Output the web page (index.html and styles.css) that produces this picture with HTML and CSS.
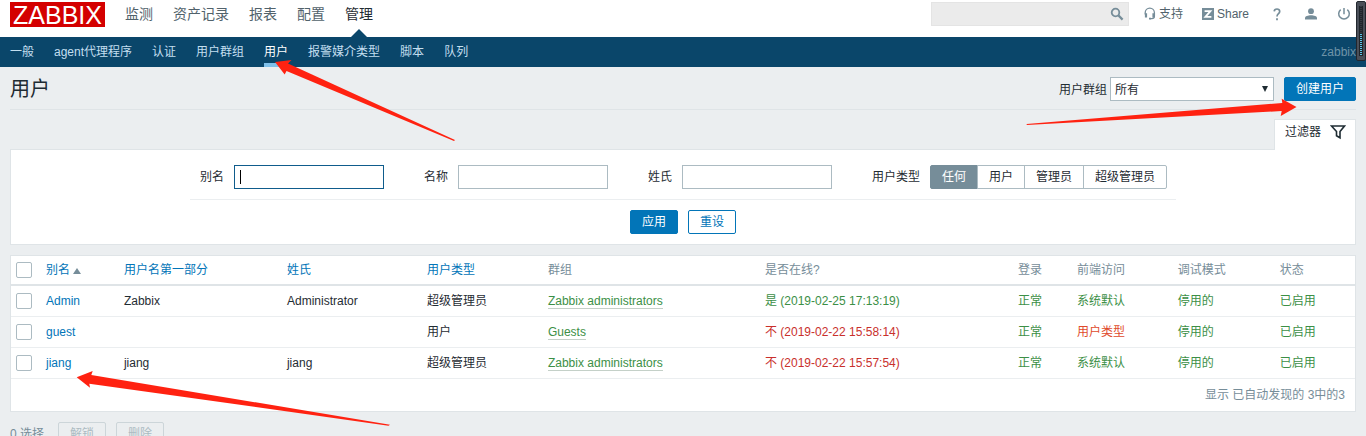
FILE: index.html
```html
<!DOCTYPE html>
<html lang="zh-CN">
<head>
<meta charset="utf-8">
<title>用户</title>
<link rel="stylesheet" href="styles.css">
</head>
<body>
<header class="top">
  <a class="logo" href="#">ZABBIX</a>
  <nav class="menu">
    <a href="#">监测</a>
    <a href="#">资产记录</a>
    <a href="#">报表</a>
    <a href="#">配置</a>
    <a href="#" class="current">管理</a>
  </nav>
  <form class="search">
    <input type="text" aria-label="搜索">
    <button type="button" aria-label="搜索">
      <svg width="14" height="14" viewBox="0 0 14 14"><circle cx="5.5" cy="5.5" r="3.8" fill="none" stroke="#768d99" stroke-width="1.8"/><path d="M8.4 8.4L12.6 12.6" stroke="#768d99" stroke-width="2.2"/></svg>
    </button>
  </form>
  <nav class="tools">
    <a class="support" href="#"><svg width="12" height="14" viewBox="0 0 12 14" fill="none" stroke="#768d99"><path d="M1.2 7.5V5.8a4.6 4.6 0 0 1 9.2 0v3.4c0 1.6-.9 2.4-2.6 2.4H6.4" stroke-width="1.3"/><path d="M2 6.2v4.2M9.5 6.2v4.2" stroke-width="2.2"/><path d="M5 11.6h2" stroke-width="1.8"/></svg>支持</a>
    <a class="share" href="#"><svg width="12" height="12" viewBox="0 0 12 12"><path fill="#768d99" d="M0 0h12v12H0z"/><path fill="none" stroke="#fff" stroke-width="1.8" d="M2.600 3.200h5.800L3.400 8.800h6"/></svg>Share</a>
    <a class="help" href="#" aria-label="帮助"><svg width="8" height="13" viewBox="0 0 8 13"><path fill="none" stroke="#768d99" stroke-width="1.700" d="M1.200 3.400C1.300 1.900 2.400 1 4 1s2.700 1 2.700 2.400C6.700 5.700 4 5.600 4 8.500"/><path fill="#768d99" d="M3.100 10.300h1.800v1.900H3.100z"/></svg></a>
    <a class="profile" href="#" aria-label="用户"><svg width="12" height="12" viewBox="0 0 12 12" fill="#768d99"><circle cx="6" cy="3.200" r="2.900"/><path d="M0 11.500V10c0-1.800 3-2.800 6-2.800s6 1 6 2.800v1.500z"/></svg></a>
    <a class="power" href="#" aria-label="注销"><svg width="14" height="14" viewBox="0 0 14 14" fill="none" stroke="#768d99" stroke-width="1.500"><path d="M3.700 2.600a5.300 5.300 0 1 0 6.600 0M7 1v6.300"/></svg></a>
  </nav>
</header>
<nav class="subnav">
  <a href="#">一般</a>
  <a href="#">agent代理程序</a>
  <a href="#">认证</a>
  <a href="#">用户群组</a>
  <a href="#" class="current">用户</a>
  <a href="#">报警媒介类型</a>
  <a href="#">脚本</a>
  <a href="#">队列</a>
  <span class="server">zabbix</span>
</nav>
<main>
  <div class="heading">
    <h1>用户</h1>
    <label for="group">用户群组</label>
    <span class="select"><select id="group"><option>所有</option></select></span>
    <button class="btn primary" type="button">创建用户</button>
  </div>
  <div class="filter-tab">
    <button type="button">过滤器 <svg width="16" height="16" viewBox="0 0 16 16"><path fill="none" stroke="#1f2c33" stroke-width="1.600" d="M1.500 2h13L10 7.500v6.300l-3.500-2V7.500z"/></svg></button>
  </div>
  <form class="filter">
    <div class="fields">
      <div class="field"><label for="alias">别名</label><span class="focused"><input id="alias" type="text"></span></div>
      <div class="field"><label for="name">名称</label><input id="name" type="text"></div>
      <div class="field"><label for="surname">姓氏</label><input id="surname" type="text"></div>
      <div class="field"><span id="type-label">用户类型</span>
        <div class="segments" role="radiogroup" aria-labelledby="type-label">
          <input type="radio" name="type" id="t0" checked><label for="t0">任何</label>
          <input type="radio" name="type" id="t1"><label for="t1">用户</label>
          <input type="radio" name="type" id="t2"><label for="t2">管理员</label>
          <input type="radio" name="type" id="t3"><label for="t3">超级管理员</label>
        </div>
      </div>
    </div>
    <div class="actions">
      <button class="btn primary" type="button">应用</button>
      <button class="btn" type="button">重设</button>
    </div>
  </form>
  <section class="list">
    <table>
      <colgroup><col class="c-check"><col class="c-alias"><col class="c-name"><col class="c-surname"><col class="c-type"><col class="c-groups"><col class="c-online"><col class="c-login"><col class="c-access"><col class="c-debug"><col></colgroup>
      <thead>
        <tr><th><input type="checkbox" aria-label="全选"></th><th><a href="#">别名<span class="sort"></span></a></th><th><a href="#">用户名第一部分</a></th><th><a href="#">姓氏</a></th><th><a href="#">用户类型</a></th><th>群组</th><th>是否在线?</th><th>登录</th><th>前端访问</th><th>调试模式</th><th>状态</th></tr>
      </thead>
      <tbody>
        <tr><td><input type="checkbox" aria-label="Admin"></td><td><a href="#">Admin</a></td><td>Zabbix</td><td>Administrator</td><td>超级管理员</td><td><a class="group" href="#">Zabbix administrators</a></td><td class="green">是 (2019-02-25 17:13:19)</td><td class="green">正常</td><td class="green">系统默认</td><td class="green">停用的</td><td class="green">已启用</td></tr>
        <tr><td><input type="checkbox" aria-label="guest"></td><td><a href="#">guest</a></td><td></td><td></td><td>用户</td><td><a class="group" href="#">Guests</a></td><td class="red">不 (2019-02-22 15:58:14)</td><td class="green">正常</td><td class="orange">用户类型</td><td class="green">停用的</td><td class="green">已启用</td></tr>
        <tr><td><input type="checkbox" aria-label="jiang"></td><td><a href="#">jiang</a></td><td>jiang</td><td>jiang</td><td>超级管理员</td><td><a class="group" href="#">Zabbix administrators</a></td><td class="red">不 (2019-02-22 15:57:54)</td><td class="green">正常</td><td class="green">系统默认</td><td class="green">停用的</td><td class="green">已启用</td></tr>
      </tbody>
    </table>
    <p class="summary">显示 已自动发现的 3中的3</p>
  </section>
  <div class="bulk">
    <span>0 选择</span>
    <button class="btn" type="button" disabled>解锁</button>
    <button class="btn" type="button" disabled>删除</button>
  </div>
</main>
<svg class="arrows" width="1366" height="436" viewBox="0 0 1366 436" aria-hidden="true">
  <path d="M275 62L291.500 60L288 63.500L455 140L454 141L286.500 71L284.700 74.600Z"/>
  <path d="M1296.500 107L1281.700 98.700L1282.300 103L1026.700 124V125L1281.700 111L1280.700 116Z"/>
  <path d="M76.700 377.300L92.700 371L91.300 375L390 424.700L388.500 425.700L89.300 383.700L90 387.700Z"/>
</svg>
<div class="meter"><span></span></div>
</body>
</html>
```

FILE: styles.css
```css
* { box-sizing: border-box; }
body {
  position: relative;
  height: 100vh;
  margin: 0;
  overflow: hidden;
  background: #ebeef0;
  color: #1f2c33;
  font: 12px/18px "Liberation Sans", "Noto Sans CJK SC", sans-serif;
}
a { color: #0275b8; text-decoration: none; }
svg { display: block; }
input, select, button { font: inherit; color: inherit; }

.top { display: flex; height: 37px; padding: 2px 16px 0 10px; background: #fff; }
.logo {
  width: 95px;
  height: 25px;
  background: #d40000;
  color: #fff;
  font-size: 25px;
  line-height: 26px;
  text-align: center;
}
.menu { display: flex; flex: 1; gap: 20px; margin-left: 20px; font-size: 14px; line-height: 24px; }
.menu a { color: #51626b; }
.menu .current { position: relative; color: #1f2c33; }
.menu .current::after {
  content: "";
  position: absolute;
  bottom: 0;
  left: 6px;
  border: 8px solid transparent;
  border-top: 0;
  border-bottom-color: #0a466a;
}
.search { position: relative; width: 198px; height: 24px; }
.search input { width: 100%; height: 24px; border: 1px solid #e4e4e4; background: #ebebeb; }
.search button { position: absolute; top: 5px; right: 5px; padding: 0; border: 0; background: none; }
.tools { display: flex; align-items: center; height: 24px; margin-left: 15px; }
.tools a { display: flex; align-items: center; gap: 3px; color: #51626b; }
.share { margin-left: 19px; }
.help { margin-left: 24px; }
.profile { margin-left: 24px; }
.power { margin-left: 20px; }
.tools .power { margin-right: -1px; }

.subnav { display: flex; gap: 20px; height: 30px; padding: 0 10px; background: #0a466a; line-height: 30px; }
.subnav a { color: #c3dff0; }
.subnav .current { border-bottom: 4px solid #7fc0ea; color: #fff; }
.server { margin-left: auto; color: #6f94a8; }

main { padding: 0 10px; }
.heading { display: flex; align-items: center; height: 43px; padding-top: 2px; border-bottom: 1px solid #dfe4e7; }
h1 { flex: 1; margin: 0; font-size: 20px; font-weight: 400; line-height: 28px; }
.heading label { padding-top: 2px; }
.select { position: relative; margin: 0 10px 0 3px; }
.select select {
  display: block;
  width: 164px;
  height: 24px;
  padding: 2px 4px 0;
  border: 1px solid #acbbc2;
  border-radius: 0;
  background: #fff;
  appearance: none;
}
.select::after {
  content: "";
  position: absolute;
  top: 9px;
  right: 6px;
  border: 3px solid transparent;
  border-top: 6px solid #1f2c33;
  border-bottom: 0;
}
.btn {
  height: 24px;
  padding: 0 11px;
  border: 1px solid #0275b8;
  border-radius: 2px;
  background: #fff;
  color: #0275b8;
  line-height: 22px;
}
.btn.primary { background: #0275b8; color: #fff; }
.btn:disabled { border-color: #ccd5d9; background: none; color: #acbbc2; }

.filter-tab { display: flex; justify-content: flex-end; margin-top: 9px; }
.filter-tab button {
  position: relative;
  display: flex;
  align-items: center;
  gap: 9px;
  height: 31px;
  margin-bottom: -1px;
  padding: 0 9px 6px 10px;
  border: 1px solid #dfe4e7;
  border-bottom: 0;
  background: #fff;
}
.filter { padding: 15px 10px 10px; border: 1px solid #dfe4e7; background: #fff; }
.fields {
  display: flex;
  gap: 40px;
  width: fit-content;
  margin: 0 auto;
  padding: 0 9px 10px 10px;
  border-bottom: 1px solid #ebeef0;
}
.field { display: flex; align-items: center; gap: 10px; }
.field > input, .focused input { display: block; width: 150px; height: 24px; border: 1px solid #acbbc2; background: #fff; }
.focused { position: relative; }
.focused input { border-color: #0f5c8c; outline: 0; }
.focused::after { content: ""; position: absolute; top: 5px; left: 6px; width: 1px; height: 14px; background: #000; }
.segments { display: flex; }
.segments input { position: absolute; opacity: 0; }
.segments label { height: 24px; padding: 0 11px; border: 1px solid #acbbc2; line-height: 22px; }
.segments label + input + label { margin-left: -1px; }
.segments label:first-of-type { border-radius: 2px 0 0 2px; }
.segments label:last-of-type { border-radius: 0 2px 2px 0; }
.segments input:checked + label { border-color: #768d99; background: #768d99; color: #fff; }
.actions { display: flex; justify-content: center; gap: 10px; padding-top: 10px; }

.list { margin-top: 10px; border: 1px solid #dfe4e7; background: #fff; }
table { width: 100%; border-collapse: separate; border-spacing: 0; table-layout: fixed; }
.c-check { width: 30px; }
.c-alias { width: 5.8%; }
.c-name { width: 12.13%; }
.c-surname { width: 10.42%; }
.c-type { width: 9%; }
.c-groups { width: 16.15%; }
.c-online { width: 18.82%; }
.c-login { width: 4.39%; }
.c-access { width: 7.51%; }
.c-debug { width: 7.59%; }
th, td { height: 31px; padding: 0 5px; border-bottom: 1px solid #ebeef0; font-weight: 400; text-align: left; white-space: nowrap; }
th { height: 30px; border-bottom: 2px solid #dfe4e7; color: #768d99; }
td input, th input {
  display: block;
  width: 16px;
  height: 16px;
  margin: 0;
  border: 1px solid #acbbc2;
  border-radius: 2px;
  background: #fff;
  appearance: none;
}
.sort { display: inline-block; margin-left: 3px; border: 4px solid transparent; border-top: 0; border-bottom: 6px solid #768d99; }
.group { border-bottom: 1px solid #c4d0c8; }
.green, .group { color: #3c8f46; }
.red { color: #c9302c; }
.orange { color: #e04a2b; }
.summary { margin: 0; padding: 7px 10px; color: #768d99; text-align: right; }

.bulk { display: flex; align-items: center; gap: 10px; margin-top: 10px; color: #768d99; }
.bulk span { margin-right: 4px; }

.arrows { position: absolute; top: 0; left: 0; fill: #ff2211; pointer-events: none; }
.meter { position: absolute; top: 1px; right: 0; width: 10px; height: 60px; padding: 4px 2px; border: 1px solid #22272e; border-radius: 2px; background: #4a4f58; }
.meter span {
  display: block;
  height: 100%;
  border: solid #20252b;
  border-width: 0 1px;
  background: repeating-linear-gradient(transparent 0 1px, #20252b 1px 2px), linear-gradient(#343a42 0 54%, #5cc8ea 54%);
}
```
